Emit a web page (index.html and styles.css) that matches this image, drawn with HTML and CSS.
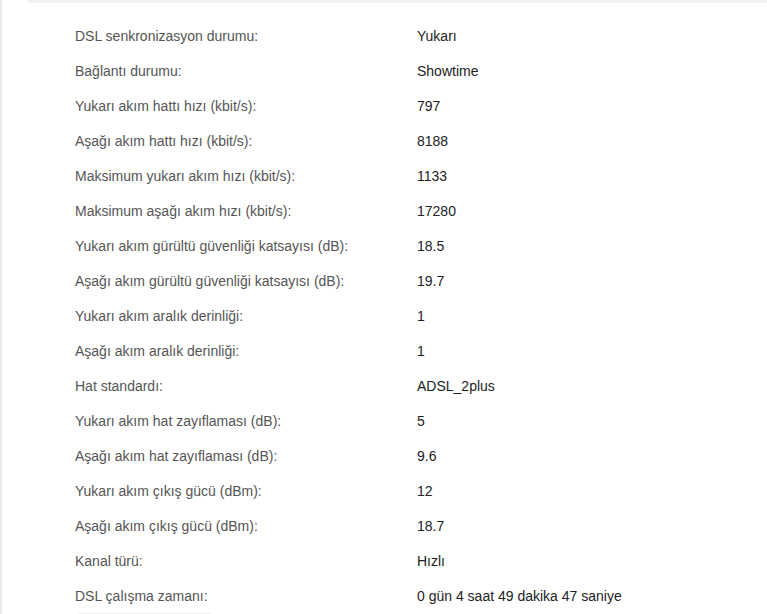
FILE: index.html
```html
<!DOCTYPE html>
<html lang="tr">
<head>
<meta charset="utf-8">
<link rel="stylesheet" href="styles.css">
</head>
<body>
<div class="page">
  <div class="top-band"></div>
  <div class="info">
    <div class="row"><span class="label">DSL senkronizasyon durumu:</span><span class="value">Yukarı</span></div>
    <div class="row"><span class="label">Bağlantı durumu:</span><span class="value">Showtime</span></div>
    <div class="row"><span class="label">Yukarı akım hattı hızı (kbit/s):</span><span class="value">797</span></div>
    <div class="row"><span class="label">Aşağı akım hattı hızı (kbit/s):</span><span class="value">8188</span></div>
    <div class="row"><span class="label">Maksimum yukarı akım hızı (kbit/s):</span><span class="value">1133</span></div>
    <div class="row"><span class="label">Maksimum aşağı akım hızı (kbit/s):</span><span class="value">17280</span></div>
    <div class="row"><span class="label">Yukarı akım gürültü güvenliği katsayısı (dB):</span><span class="value">18.5</span></div>
    <div class="row"><span class="label">Aşağı akım gürültü güvenliği katsayısı (dB):</span><span class="value">19.7</span></div>
    <div class="row"><span class="label">Yukarı akım aralık derinliği:</span><span class="value">1</span></div>
    <div class="row"><span class="label">Aşağı akım aralık derinliği:</span><span class="value">1</span></div>
    <div class="row"><span class="label">Hat standardı:</span><span class="value">ADSL_2plus</span></div>
    <div class="row"><span class="label">Yukarı akım hat zayıflaması (dB):</span><span class="value">5</span></div>
    <div class="row"><span class="label">Aşağı akım hat zayıflaması (dB):</span><span class="value">9.6</span></div>
    <div class="row"><span class="label">Yukarı akım çıkış gücü (dBm):</span><span class="value">12</span></div>
    <div class="row"><span class="label">Aşağı akım çıkış gücü (dBm):</span><span class="value">18.7</span></div>
    <div class="row"><span class="label">Kanal türü:</span><span class="value">Hızlı</span></div>
    <div class="row"><span class="label">DSL çalışma zamanı:</span><span class="value">0 gün 4 saat 49 dakika 47 saniye</span></div>
  </div>
  <div class="actions"><div class="btn"></div></div>
</div>
</body>
</html>
```
FILE: styles.css
```css
html, body {
  margin: 0;
  padding: 0;
  background: #ffffff;
  font-family: "Liberation Sans", Arial, sans-serif;
  font-size: 14px;
}
.page {
  border-left: 2px solid #ebebeb;
  min-height: 614px;
  box-sizing: border-box;
}
.top-band {
  margin-left: 25px;
  height: 3px;
  background: #f2f2f2;
  border-bottom-left-radius: 6px;
}
.info {
  padding-top: 15px;
  padding-left: 73px;
}
.row {
  display: flex;
  align-items: center;
  height: 35px;
}
.label {
  width: 342px;
  color: #555555;
}
.value {
  color: #222222;
}
.actions {
  padding-left: 75px;
}
.btn {
  width: 136px;
  height: 30px;
  background: #efefef;
  border-radius: 4px;
}
```
